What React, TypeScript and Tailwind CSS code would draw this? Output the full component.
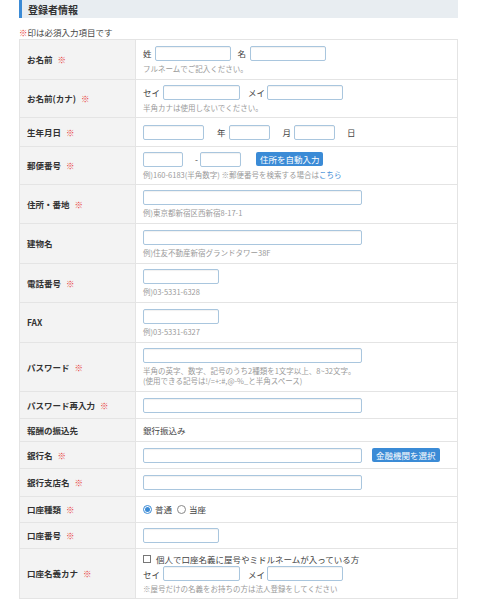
import type { ReactNode } from "react";

const font = { fontFamily: '"Noto Sans CJK JP", "Noto Sans", sans-serif' };

function Req() {
  return <span className="ml-[5px] font-normal text-[#e8413c]">※</span>;
}

function Box({ w }: { w: string }) {
  return (
    <input
      type="text"
      className={`h-[15px] ${w} rounded-[2px] border border-[#a9c6de] bg-white shadow-[inset_0_1px_1px_rgba(0,0,0,0.06)] outline-none`}
    />
  );
}

function Help({ children }: { children: ReactNode }) {
  return <p className="mt-[3px] text-[7.5px] leading-[10px] text-[#9a9a9a]">{children}</p>;
}

function Row({
  label,
  req,
  h,
  children,
}: {
  label: string;
  req?: boolean;
  h: string;
  children: ReactNode;
}) {
  return (
    <div className={`flex ${h} border-b border-[#e4e4e4]`}>
      <div className="flex w-[116px] shrink-0 items-center border-r border-[#e4e4e4] bg-[#f3f3f3] pl-[7px] text-[8.5px] font-bold text-[#333]">
        {label}
        {req && <Req />}
      </div>
      <div className="flex flex-1 flex-col justify-center pl-[7px] text-[8.5px] text-[#444]">
        {children}
      </div>
    </div>
  );
}

function Btn({ children }: { children: ReactNode }) {
  return (
    <span className="flex h-[14px] items-center rounded-[2px] bg-[#3b8bd6] px-[4px] text-[8.5px] text-white">
      {children}
    </span>
  );
}

export default function App() {
  return (
    <div className="h-[600px] w-[477px] overflow-hidden bg-white pl-[19px]" style={font}>
      <div className="w-[439px]">
        <div className="flex h-[18px] items-center border-l-[3px] border-[#3b8bd6] bg-[#e8edf1] pl-[6px] text-[10px] font-bold text-[#333]">
          登録者情報
        </div>
        <div className="flex h-[21px] items-end pb-[1px] text-[8.5px] leading-[11px] text-[#444]">
          <span className="text-[#e8413c]">※</span>印は必須入力項目です
        </div>

        <div className="border-x border-t border-[#e4e4e4]">
          <Row label="お名前" req h="h-[40px]">
            <div className="flex items-center">
              <span className="mr-[3px]">姓</span>
              <Box w="w-[76px]" />
              <span className="ml-[7px] mr-[4px]">名</span>
              <Box w="w-[76px]" />
            </div>
            <Help>フルネームでご記入ください。</Help>
          </Row>

          <Row label="お名前(カナ)" req h="h-[38px]">
            <div className="flex items-center">
              <span className="mr-[3px]">セイ</span>
              <Box w="w-[77px]" />
              <span className="ml-[8px] mr-[2px]">メイ</span>
              <Box w="w-[76px]" />
            </div>
            <Help>半角カナは使用しないでください。</Help>
          </Row>

          <Row label="生年月日" req h="h-[29px]">
            <div className="flex items-center">
              <Box w="w-[61px]" />
              <span className="ml-[13px] mr-[3px]">年</span>
              <Box w="w-[41px]" />
              <span className="ml-[13px] mr-[3px]">月</span>
              <Box w="w-[41px]" />
              <span className="ml-[12px]">日</span>
            </div>
          </Row>

          <Row label="郵便番号" req h="h-[38px]">
            <div className="flex items-center">
              <Box w="w-[40px]" />
              <span className="ml-[12px] mr-[2px]">-</span>
              <Box w="w-[41px]" />
              <span className="ml-[15px]">
                <Btn>住所を自動入力</Btn>
              </span>
            </div>
            <Help>
              例)160-6183(半角数字) ※郵便番号を検索する場合は
              <span className="text-[#3b8bd6]">こちら</span>
            </Help>
          </Row>

          <Row label="住所・番地" req h="h-[39px]">
            <Box w="w-[219px]" />
            <Help>例)東京都新宿区西新宿8-17-1</Help>
          </Row>

          <Row label="建物名" h="h-[40px]">
            <Box w="w-[219px]" />
            <Help>例)住友不動産新宿グランドタワー38F</Help>
          </Row>

          <Row label="電話番号" req h="h-[39px]">
            <Box w="w-[76px]" />
            <Help>例)03-5331-6328</Help>
          </Row>

          <Row label="FAX" h="h-[40px]">
            <Box w="w-[76px]" />
            <Help>例)03-5331-6327</Help>
          </Row>

          <Row label="パスワード" req h="h-[49px]">
            <Box w="w-[219px]" />
            <Help>
              半角の英字、数字、記号のうち2種類を1文字以上、8~32文字。
              <br />
              (使用できる記号は!/=+:#,@-%_と半角スペース)
            </Help>
          </Row>

          <Row label="パスワード再入力" req h="h-[27px]">
            <Box w="w-[219px]" />
          </Row>

          <Row label="報酬の振込先" h="h-[23px]">
            <span>銀行振込み</span>
          </Row>

          <Row label="銀行名" req h="h-[27px]">
            <div className="flex items-center">
              <Box w="w-[219px]" />
              <span className="ml-[10px]">
                <Btn>金融機関を選択</Btn>
              </span>
            </div>
          </Row>

          <Row label="銀行支店名" req h="h-[28px]">
            <Box w="w-[219px]" />
          </Row>

          <Row label="口座種類" req h="h-[26px]">
            <div className="flex items-center">
              <span className="flex h-[9px] w-[9px] items-center justify-center rounded-full border border-[#3b8bd6] bg-white">
                <span className="h-[5px] w-[5px] rounded-full bg-[#3b8bd6]" />
              </span>
              <span className="ml-[3px]">普通</span>
              <span className="ml-[5px] h-[9px] w-[9px] rounded-full border border-[#888] bg-white" />
              <span className="ml-[3px]">当座</span>
            </div>
          </Row>

          <Row label="口座番号" req h="h-[26px]">
            <Box w="w-[76px]" />
          </Row>

          <Row label="口座名義カナ" req h="h-[50px]">
            <div className="flex items-center">
              <span className="mr-[5px] h-[8px] w-[8px] border border-[#777] bg-white" />
              <span>個人で口座名義に屋号やミドルネームが入っている方</span>
            </div>
            <div className="mt-[1px] flex items-center">
              <span className="mr-[3px]">セイ</span>
              <Box w="w-[77px]" />
              <span className="ml-[8px] mr-[2px]">メイ</span>
              <Box w="w-[76px]" />
            </div>
            <Help>※屋号だけの名義をお持ちの方は法人登録をしてください</Help>
          </Row>
        </div>
      </div>
    </div>
  );
}
